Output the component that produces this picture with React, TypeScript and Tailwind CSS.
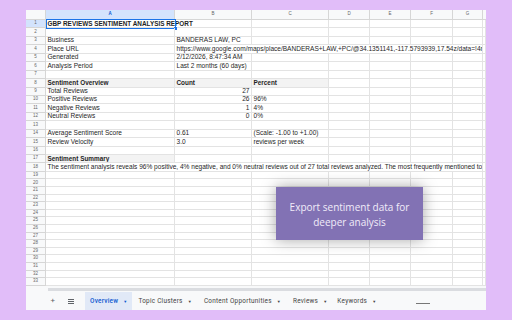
import React from 'react'

type C = { t?: React.ReactNode; span?: number; cls?: string }

const spanCls: Record<number, string> = {
  1: '',
  2: 'col-span-2',
  3: 'col-span-3',
  6: 'col-span-6',
  7: 'col-span-7',
}

function Row({ n, tall, cells = [], sel }: { n: number; tall?: boolean; cells?: C[]; sel?: boolean }) {
  const out: React.ReactNode[] = []
  let used = 0
  cells.forEach((c, i) => {
    const s = c.span || 1
    used += s
    out.push(
      <div
        key={i}
        className={`${spanCls[s]} border-r border-b border-[#e3e3e3] px-[1.5px] whitespace-nowrap overflow-hidden leading-none flex items-center ${c.cls || ''}`}
      >
        {c.t}
      </div>
    )
  })
  for (let i = used; i < 8; i++) {
    out.push(<div key={'e' + i} className="border-r border-b border-[#e3e3e3]" />)
  }
  return (
    <div
      className={`relative grid grid-cols-[20px_129px_77px_77px_41px_41px_42px_30px_3px] ${tall ? 'h-[8.45px]' : 'h-[7.6px]'}`}
    >
      <div
        className={`border-r border-b border-[#d6d6d6] text-[4.5px] text-[#666] flex items-center justify-center leading-none ${sel ? 'bg-[#d3e3fd] text-[#0b57d0]' : 'bg-[#f8f9fa]'}`}
      >
        {n}
      </div>
      {out}
      {sel && (
        <div className="absolute left-[20px] top-[-1px] w-[130px] h-[9.5px] border border-[#1a73e8] pointer-events-none">
          <div className="absolute right-[-2px] bottom-[-2px] w-[3px] h-[3px] bg-[#1a73e8]" />
        </div>
      )}
    </div>
  )
}

export default function App() {
  const cols = ['A', 'B', 'C', 'D', 'E', 'F', 'G']
  const empties19 = Array.from({ length: 15 }, (_, i) => i + 19)
  return (
    <div className="w-[512px] h-[320px] bg-[#e1bdf9] pt-[10px] pl-[26px] relative overflow-hidden font-['Liberation_Sans',Arial,sans-serif] text-[6.55px] text-[#1f1f1f]">
      <div className="w-[460px] h-[300px] bg-white flex flex-col">
        {/* column headers */}
        <div className="grid grid-cols-[20px_129px_77px_77px_41px_41px_42px_30px_3px] h-[10px] bg-[#f8f9fa] text-[4.5px] text-[#666]">
          <div className="border-r border-b border-[#d6d6d6]" />
          {cols.map((c) => (
            <div
              key={c}
              className={`border-r border-b border-[#d6d6d6] flex items-center justify-center ${c === 'A' ? 'bg-[#d3e3fd] text-[#0b57d0] font-bold' : ''}`}
            >
              {c}
            </div>
          ))}
          <div className="border-b border-[#d6d6d6]" />
        </div>

        <Row n={1} tall sel cells={[{ t: 'GBP REVIEWS SENTIMENT ANALYSIS REPORT', span: 2, cls: 'font-bold text-[6.4px]' }]} />
        <Row n={2} tall />
        <Row n={3} tall cells={[{ t: 'Business' }, { t: 'BANDERAS LAW, PC' }]} />
        <Row
          n={4}
          tall
          cells={[
            { t: 'Place URL' },
            { t: 'https://www.google.com/maps/place/BANDERAS+LAW,+PC/@34.1351141,-117.5793939,17.54z/data=!4m', span: 6 },
          ]}
        />
        <Row n={5} tall cells={[{ t: 'Generated' }, { t: '2/12/2026, 8:47:34 AM' }]} />
        <Row n={6} tall cells={[{ t: 'Analysis Period' }, { t: 'Last 2 months (60 days)' }]} />
        <Row n={7} tall />
        <Row
          n={8}
          tall
          cells={[
            { t: 'Sentiment Overview', cls: 'font-bold text-[6.4px] bg-[#f3f3f3]' },
            { t: 'Count', cls: 'font-bold text-[6.4px] bg-[#f3f3f3]' },
            { t: 'Percent', cls: 'font-bold text-[6.4px] bg-[#f3f3f3]' },
          ]}
        />
        <Row n={9} tall cells={[{ t: 'Total Reviews' }, { t: '27', cls: 'justify-end' }]} />
        <Row n={10} tall cells={[{ t: 'Positive Reviews' }, { t: '26', cls: 'justify-end' }, { t: '96%' }]} />
        <Row n={11} tall cells={[{ t: 'Negative Reviews' }, { t: '1', cls: 'justify-end' }, { t: '4%' }]} />
        <Row n={12} tall cells={[{ t: 'Neutral Reviews' }, { t: '0', cls: 'justify-end' }, { t: '0%' }]} />
        <Row n={13} tall />
        <Row n={14} tall cells={[{ t: 'Average Sentiment Score' }, { t: '0.61' }, { t: '(Scale: -1.00 to +1.00)' }]} />
        <Row n={15} tall cells={[{ t: 'Review Velocity' }, { t: '3.0' }, { t: 'reviews per week' }]} />
        <Row n={16} tall />
        <Row n={17} tall cells={[{ t: 'Sentiment Summary', cls: 'font-bold text-[6.4px] bg-[#f3f3f3]' }]} />
        <Row
          n={18}
          tall
          cells={[
            {
              t: 'The sentiment analysis reveals 96% positive, 4% negative, and 0% neutral reviews out of 27 total reviews analyzed. The most frequently mentioned topics',
              span: 7,
            },
          ]}
        />
        {empties19.map((n) => (
          <Row key={n} n={n} />
        ))}

        {/* scrollbar */}
        <div className="flex h-[6px] bg-[#f8f9fa] pt-[2px]">
          <div className="w-[22px]" />
          <div className="flex-1 h-[3px] bg-[#dadce0]" />
        </div>

        {/* sheet tabs */}
        <div className="flex-1 bg-[#f8f9fa] flex items-stretch font-['Roboto',Arial,sans-serif] text-[6.4px] tracking-[0.25px] text-[#444]">
          <div className="w-[23px]" />
          <div className="w-[8px] flex items-center justify-center text-[8px] text-[#5f6368] pt-[1px]">+</div>
          <div className="w-[11px]" />
          <div className="w-[7px] flex flex-col justify-center gap-[1.2px] pt-[1px]">
            <div className="h-[0.8px] w-[6px] bg-[#5f6368]" />
            <div className="h-[0.8px] w-[6px] bg-[#5f6368]" />
            <div className="h-[0.8px] w-[6px] bg-[#5f6368]" />
          </div>
          <div className="w-[10px]" />
          <div className="flex items-center gap-[5px] px-[5px] pt-[2px] bg-[#e1e9f7] text-[#0b57d0] font-medium">
            Overview <span className="text-[4px]">▼</span>
          </div>
          <div className="flex items-center gap-[5px] px-[6px] pt-[2px]">
            Topic Clusters <span className="text-[4px]">▼</span>
          </div>
          <div className="flex items-center gap-[5px] px-[6px] pt-[2px]">
            Content Opportunities <span className="text-[4px]">▼</span>
          </div>
          <div className="flex items-center gap-[5px] px-[6px] pt-[2px]">
            Reviews <span className="text-[4px]">▼</span>
          </div>
          <div className="flex items-center gap-[5px] px-[4px] pt-[2px]">
            Keywords <span className="text-[4px]">▼</span>
          </div>
          <div className="ml-[36px] self-center mt-[5px] w-[14px] h-[1.5px] bg-[#777]" />
        </div>
      </div>

      {/* callout */}
      <div className="absolute left-[276px] top-[187px] w-[147px] h-[53px] pt-[2px] bg-[#8272b4] shadow-[0_0_14px_rgba(0,0,0,0.35)] flex items-center justify-center text-center font-['Open_Sans',sans-serif] text-[10px] leading-[14.6px] text-[#f1ecf9]">
        Export sentiment data for
        <br />
        deeper analysis
      </div>
    </div>
  )
}
